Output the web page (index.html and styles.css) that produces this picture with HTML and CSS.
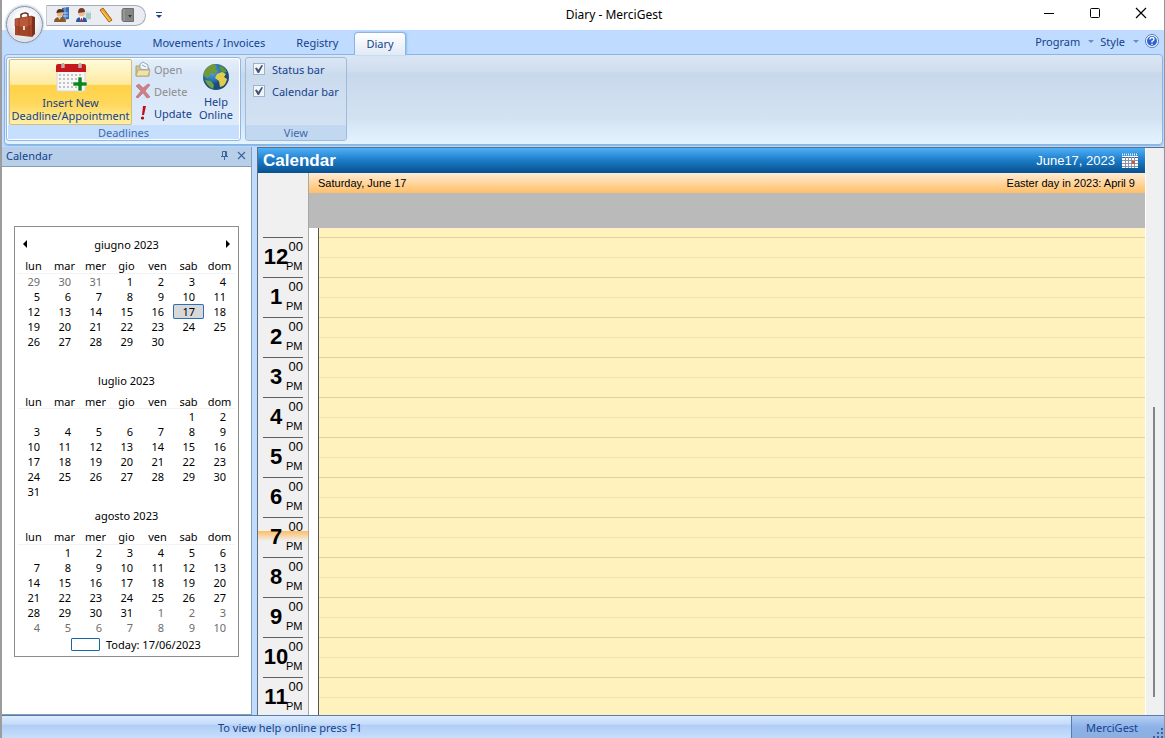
FILE: index.html
```html
<!DOCTYPE html>
<html lang="en">
<head>
<meta charset="utf-8">
<title>Diary - MerciGest</title>
<link rel="stylesheet" href="styles.css">
</head>
<body>
<div class="window">
  <header class="titlebar">
    <button class="app-button" aria-label="Application menu">
      <svg width="24" height="28" viewBox="0 0 24 28"><path d="M8 7V3.500Q12 1 15 3V6" fill="none" stroke="#6b2a18" stroke-width="1.500"/><path d="M2 8 19 5l2 18-2 3L2 24z" fill="#a44528"/><path d="M19 5l3 1v17l-3 3z" fill="#7c301c"/><path d="M2 8 19 5v9l-7 3-10-2z" fill="#b9593a" stroke="#8a3a22" stroke-width=".6"/><path d="M6 8v16M16 6v19" stroke="#8a3a22" stroke-width=".8"/><path d="M10 15h2v4h-2z" fill="#e8d6bd"/></svg>
    </button>
    <div class="quick">
      <button aria-label="Suppliers"><svg width="16" height="16" viewBox="0 0 16 16"><path d="M8 1l7-1v12l-7 1z" fill="#3b6fb8"/><path d="M11 0v12" stroke="#8fb8e6"/><path d="M9 6h5M9 9h5" stroke="#b9d7f5"/><path d="M0 15q0-5 6-5t6 5z" fill="#8a5a26"/><path d="M4 10h3l-1.500 3z" fill="#e8d9c4"/><circle cx="6" cy="6.500" r="3.200" fill="#e9b683"/><path d="M2.500 6q0-4 3.500-4t4 3z" fill="#4e3420"/></svg></button>
      <button aria-label="Customers"><svg width="16" height="16" viewBox="0 0 16 16"><path d="M9 4h6v9H9z" fill="#d5e2ee"/><path d="M10 7h5M10 9h5M10 11h5" stroke="#83b79a"/><path d="M0 15q0-5 5.500-5t5.500 5z" fill="#31549e"/><path d="M3.500 10h4l-2 5z" fill="#fff"/><path d="M5.500 11v4" stroke="#d22"/><circle cx="5.500" cy="6" r="3.200" fill="#f0bb91"/><path d="M2 6q0-5 3.500-5T9 5z" fill="#6f3f2a"/></svg></button>
      <button aria-label="Tools"><svg width="16" height="16" viewBox="0 0 16 16"><path d="M2 3l3-2 9 12-3 2z" fill="#eda432" stroke="#a9620f"/><path d="M4 4l8 10" stroke="#ffd768"/></svg></button>
      <button aria-label="Archive"><svg width="16" height="16" viewBox="0 0 16 16"><path d="M3 1.500h10.500v13H3L2 13V3z" fill="#868686" stroke="#6e6e6e"/><path d="M4 2v12" stroke="#a5a5a5"/><path d="M8 8h4l-1 1-1 2-1-2z" fill="#333"/></svg></button>
    </div>
    <button class="customize" aria-label="Customize toolbar"><svg width="6" height="6" viewBox="0 0 6 6"><path d="M0 0h6v1H0zM0 3h6L3 6z" fill="#23457f"/></svg></button>
    <h1>Diary - MerciGest</h1>
    <div class="window-controls">
      <button aria-label="Minimize"><svg width="12" height="12"><path d="M1 6.500h10" stroke="#000"/></svg></button>
      <button aria-label="Maximize"><svg width="12" height="12"><rect x="1.500" y="1.500" width="9" height="9" rx="1" fill="none" stroke="#000"/></svg></button>
      <button aria-label="Close"><svg width="12" height="12"><path d="M1 1l10 10M11 1L1 11" stroke="#000" stroke-width="1.200"/></svg></button>
    </div>
  </header>

  <nav class="tabs">
    <button>Warehouse</button>
    <button>Movements / Invoices</button>
    <button>Registry</button>
    <button class="active">Diary</button>
    <div class="tab-tools">
      <button>Program<span class="caret"></span></button>
      <button>Style<span class="caret"></span></button>
      <button class="help" aria-label="Help"><svg width="14" height="14" viewBox="0 0 14 14"><circle cx="7" cy="7" r="6.500" fill="#fff" stroke="#5578b8"/><circle cx="7" cy="7" r="5" fill="#2c62cf"/><path d="M5 5.500Q5 3.500 7 3.500T9 5.300Q9 6.500 7 7.300V8.500M7 9.700v1.300" fill="none" stroke="#fff" stroke-width="1.400"/></svg></button>
    </div>
  </nav>

  <section class="ribbon">
    <div class="group group-hot">
      <div class="group-body">
        <button class="big primary">
          <svg width="32" height="32" viewBox="0 0 32 32"><path d="M2 8h28v21H2z" fill="#f7f7f7" stroke="#d8d8d8"/><path d="M4 13h24M4 17h24M4 21h24M4 25h24" stroke="#c2c2c2" stroke-width="2" stroke-dasharray="2 2"/><path d="M1 4q0-2 2-2h26q2 0 2 2v6H1z" fill="#c4181c"/><path d="M8 1v5M25 1v5" stroke="#ddd" stroke-width="3"/><path d="M8 1v5M25 1v5" stroke="#888"/><path d="M23 15h4v5h5v4h-5v5h-4v-5h-5v-4h5z" fill="#0b861c" stroke="#fff" stroke-width=".6"/></svg>
          <span>Insert New<br>Deadline/Appointment</span>
        </button>
        <div class="small-actions">
          <button disabled><svg width="16" height="16" viewBox="0 0 16 16"><path d="M1 5h4l1 2h8v8H1z" fill="#d9c67d" stroke="#b0a06a"/><path d="M5 8V3l3-2 5 3v5z" fill="#f2f6fb" stroke="#93a6c2"/><path d="M7 4l4 2" stroke="#93a6c2"/><path d="M1 15l2-6h12l-2 6z" fill="#f0e2ac" stroke="#b9aa76"/></svg>Open</button>
          <button disabled><svg width="16" height="16" viewBox="0 0 16 16"><path d="M1 3l3-2 4 4 5-4 2 1-5 6 5 6-3 1-4-5-5 5-2-1 5-6z" fill="#cf8087" stroke="#b8666e" stroke-width=".6"/></svg>Delete</button>
          <button><svg width="16" height="16" viewBox="0 0 16 16"><path d="M8 1l3 0-2 9H7z" fill="#c40c13"/><circle cx="7.500" cy="13" r="1.600" fill="#a60b12"/></svg>Update</button>
        </div>
        <button class="big online">
          <svg width="32" height="32" viewBox="0 0 32 32"><defs><radialGradient id="sea" cx="35%" cy="30%"><stop stop-color="#58a8e2"/><stop offset=".65" stop-color="#2a74b4"/><stop offset="1" stop-color="#1d4c78"/></radialGradient></defs><circle cx="16" cy="16" r="13" fill="url(#sea)"/><path d="M4 11q3-6 9-8l4 2-2 3 3 2-4 3-3-1-1 3-3 2-3-2z" fill="#719939"/><path d="M19 4q6 2 8 7l-4 1-3-3z" fill="#5c9440"/><path d="M17 13l5-2 4 2-2 3 3 2q-1 5-4 7l-3 1-1-6-4-3z" fill="#e2ce4b"/><path d="M5 19l6 1 3 4-1 4q-6-3-8-9z" fill="#6ba24a"/></svg>
          <span>Help<br>Online</span>
        </button>
      </div>
      <h2>Deadlines</h2>
    </div>
    <div class="group">
      <div class="group-body checks">
        <label><input type="checkbox" checked>Status bar</label>
        <label><input type="checkbox" checked>Calendar bar</label>
      </div>
      <h2>View</h2>
    </div>
  </section>

  <main class="workspace">
    <aside class="side">
      <div class="side-head">
        <h2>Calendar</h2>
        <button aria-label="Auto hide"><svg width="9" height="9" viewBox="0 0 9 9"><path d="M2.500 5.500v-5h4v5M1 5.500h7M4.500 6v3M5.500 1v4" fill="none" stroke="#3f659f"/></svg></button>
        <button aria-label="Close panel"><svg width="9" height="9" viewBox="0 0 9 9"><path d="M1 1l7 7M8 1L1 8" stroke="#3f659f" stroke-width="1.200"/></svg></button>
      </div>
      <div class="side-body">
        <div class="months">
          <button class="prev" aria-label="Previous month"></button>
          <button class="next" aria-label="Next month"></button>
          <table>
            <caption>giugno 2023</caption>
            <thead><tr><th>lun</th><th>mar</th><th>mer</th><th>gio</th><th>ven</th><th>sab</th><th>dom</th></tr></thead>
            <tbody>
              <tr><td class="out">29</td><td class="out">30</td><td class="out">31</td><td>1</td><td>2</td><td>3</td><td>4</td></tr>
              <tr><td>5</td><td>6</td><td>7</td><td>8</td><td>9</td><td>10</td><td>11</td></tr>
              <tr><td>12</td><td>13</td><td>14</td><td>15</td><td>16</td><td class="selected">17</td><td>18</td></tr>
              <tr><td>19</td><td>20</td><td>21</td><td>22</td><td>23</td><td>24</td><td>25</td></tr>
              <tr><td>26</td><td>27</td><td>28</td><td>29</td><td>30</td><td></td><td></td></tr>
              <tr><td colspan="7"></td></tr>
            </tbody>
          </table>
          <table>
            <caption>luglio 2023</caption>
            <thead><tr><th>lun</th><th>mar</th><th>mer</th><th>gio</th><th>ven</th><th>sab</th><th>dom</th></tr></thead>
            <tbody>
              <tr><td></td><td></td><td></td><td></td><td></td><td>1</td><td>2</td></tr>
              <tr><td>3</td><td>4</td><td>5</td><td>6</td><td>7</td><td>8</td><td>9</td></tr>
              <tr><td>10</td><td>11</td><td>12</td><td>13</td><td>14</td><td>15</td><td>16</td></tr>
              <tr><td>17</td><td>18</td><td>19</td><td>20</td><td>21</td><td>22</td><td>23</td></tr>
              <tr><td>24</td><td>25</td><td>26</td><td>27</td><td>28</td><td>29</td><td>30</td></tr>
              <tr><td>31</td><td></td><td></td><td></td><td></td><td></td><td></td></tr>
            </tbody>
          </table>
          <table>
            <caption>agosto 2023</caption>
            <thead><tr><th>lun</th><th>mar</th><th>mer</th><th>gio</th><th>ven</th><th>sab</th><th>dom</th></tr></thead>
            <tbody>
              <tr><td></td><td>1</td><td>2</td><td>3</td><td>4</td><td>5</td><td>6</td></tr>
              <tr><td>7</td><td>8</td><td>9</td><td>10</td><td>11</td><td>12</td><td>13</td></tr>
              <tr><td>14</td><td>15</td><td>16</td><td>17</td><td>18</td><td>19</td><td>20</td></tr>
              <tr><td>21</td><td>22</td><td>23</td><td>24</td><td>25</td><td>26</td><td>27</td></tr>
              <tr><td>28</td><td>29</td><td>30</td><td>31</td><td class="out">1</td><td class="out">2</td><td class="out">3</td></tr>
              <tr><td class="out">4</td><td class="out">5</td><td class="out">6</td><td class="out">7</td><td class="out">8</td><td class="out">9</td><td class="out">10</td></tr>
            </tbody>
          </table>
          <button class="today"><span class="today-box"></span>Today: 17/06/2023</button>
        </div>
      </div>
    </aside>

    <section class="diary">
      <div class="diary-main">
        <div class="diary-head">
          <h2>Calendar</h2>
          <span>June17, 2023</span>
          <svg width="16" height="16" viewBox="0 0 16 16"><path d="M0 3h16v12H0z" fill="#fff"/><path d="M0 1.500h16" stroke="#e8f2fb" stroke-width="2" stroke-dasharray="1 1"/><path d="M0 4.500h16" stroke="#41628f"/><path d="M0 7.500h16M0 10.500h16M0 13.500h16M3.500 4v11M6.500 4v11M9.500 4v11M12.500 4v11" stroke="#8796ad"/><path d="M10 8h3v3h-3z" fill="#d4583a"/></svg>
        </div>
        <div class="day-grid">
          <div class="gutter-top"></div>
          <div class="day-head">
            <div class="day-title"><span>Saturday, June 17</span><span>Easter day in 2023: April 9</span></div>
            <div class="all-day"></div>
          </div>
          <ol class="hours">
            <li><b>12</b><span>00</span><small>PM</small></li>
            <li><b>1</b><span>00</span><small>PM</small></li>
            <li><b>2</b><span>00</span><small>PM</small></li>
            <li><b>3</b><span>00</span><small>PM</small></li>
            <li><b>4</b><span>00</span><small>PM</small></li>
            <li><b>5</b><span>00</span><small>PM</small></li>
            <li><b>6</b><span>00</span><small>PM</small></li>
            <li class="now"><b>7</b><span>00</span><small>PM</small></li>
            <li><b>8</b><span>00</span><small>PM</small></li>
            <li><b>9</b><span>00</span><small>PM</small></li>
            <li><b>10</b><span>00</span><small>PM</small></li>
            <li><b>11</b><span>00</span><small>PM</small></li>
          </ol>
          <div class="slots"></div>
        </div>
      </div>
      <div class="scroll"><div class="thumb"></div></div>
    </section>
  </main>

  <footer class="status">
    <p>To view help online press F1</p>
    <div class="brand">MerciGest
      <svg class="grip" width="10" height="10" viewBox="0 0 10 10"><path d="M8 0h2v2H8zM4 4h2v2H4zM8 4h2v2H8zM0 8h2v2H0zM4 8h2v2H4zM8 8h2v2H8z" fill="#40629a"/></svg>
    </div>
  </footer>
</div>
</body>
</html>
```
FILE: styles.css
```css
* { box-sizing: border-box; }
body {
  margin: 0;
  background: #9aa1a8;
  font: 11px/13px "Noto Sans", "Open Sans", sans-serif;
  color: #15428b;
}
button { font: inherit; color: inherit; background: none; border: 0; padding: 0; margin: 0; }
h1, h2, p, ol { margin: 0; padding: 0; font-size: inherit; font-weight: normal; list-style: none; }
svg { display: block; flex: none; }

.window {
  display: flex;
  flex-direction: column;
  height: 100vh;
  border-left: 2px solid #9c9c9c;
  border-right: 1px solid #8e979f;
  background: #bfdbff;
}

/* title bar */
.titlebar {
  position: relative;
  display: flex;
  align-items: center;
  flex: none;
  height: 30px;
  padding-left: 44px;
  background: #fff;
}
.app-button {
  position: absolute;
  z-index: 2;
  left: 4px;
  top: 6px;
  width: 37px;
  height: 37px;
  display: grid;
  place-items: center;
  border: 1px solid #8494ac;
  border-radius: 50%;
  background: radial-gradient(circle at 50% 40%, #fff 30%, #dde2ea 70%, #fff 90%);
  box-shadow: 0 0 2px 1px #c3cedd;
}
.quick {
  display: flex;
  align-items: center;
  gap: 6px;
  height: 21px;
  padding: 0 9px 0 7px;
  border: 1px solid #a5acb6;
  border-left-color: #c5cad2;
  border-radius: 0 11px 11px 0 / 0 11px 11px 0;
  background: #e9ecf1;
}
.customize { margin-left: 10px; }
.titlebar h1 {
  position: absolute;
  left: 62px;
  right: 0;
  top: 7px;
  width: max-content;
  margin: 0 auto;
  font-size: 12px;
  line-height: 16px;
  color: #000;
}
.window-controls { display: flex; gap: 34px; margin: -4px 17px 0 auto; }

/* tab strip */
.tabs { display: flex; align-items: flex-end; flex: none; height: 24px; padding-left: 51px; }
.tabs > button { height: 24px; padding: 0 10px; margin-right: 11px; }
.tabs > .active {
  height: 23px;
  padding: 0 11px 2px;
  margin: 0 0 -1px -5px;
  z-index: 1;
  border: 1px solid #8db2e3;
  border-bottom: 0;
  border-radius: 4px 4px 0 0;
  background: linear-gradient(#fff, #e1eaf6);
  box-shadow: 1px 0 2px #89c3ea;
}
.tab-tools { display: flex; align-items: center; align-self: flex-start; margin-left: auto; padding: 4px 5px 0 0; gap: 6px; }
.tab-tools button { display: flex; align-items: center; gap: 8px; }
.caret { border: 3px solid transparent; border-top-color: #6d8cbb; border-bottom: 0; }

/* ribbon */
.ribbon {
  display: flex;
  flex: none;
  gap: 4px;
  height: 91px;
  margin: 0 1px 2px 2px;
  padding: 2px 1px;
  border: 1px solid #8db2e3;
  border-radius: 4px;
  background: linear-gradient(#dbe6f4, #cfddee 19%, #c8d8ec 20%, #d3e2f1 70%, #e3f4ff);
  box-shadow: 0 1px 1px #7fb9e6;
}
.group {
  display: flex;
  flex-direction: column;
  height: 84px;
  border: 1px solid #9ebbdc;
  border-radius: 3px;
  background: linear-gradient(#dce7f5, #cbdbee 20%, #d6e4f4);
  overflow: hidden;
}
.group-hot { border-color: #8fb8e8; box-shadow: inset 0 0 0 1px #fff; background: linear-gradient(#e8f1fb, #d6e5f7 20%, #e0ecfb); }
.group-body { display: flex; flex: 1; padding: 0 3px 0 2px; }
.group h2 { height: 15px; line-height: 15px; text-align: center; color: #3e6aaa; background: #c1d8f0; }
.group-hot h2 { margin: 0 1px 1px; background: #c6dfff; height: 14px; }
.big { display: flex; flex-direction: column; align-items: center; gap: 2px; padding: 3px 4px 0; }
.primary {
  width: 123px;
  height: 66px;
  margin-top: 1px;
  padding-top: 2px;
  border: 1px solid #d2bd7d;
  border-radius: 2px;
  background: linear-gradient(#fffbd9, #ffe9a0 38%, #ffd146 40%, #ffd95d 70%, #fff0a8);
}
.small-actions { display: flex; flex-direction: column; padding: 0 3px; }
.small-actions button { display: flex; align-items: center; gap: 3px; height: 22px; }
.small-actions button:disabled { color: #8d8d8d; }
.checks { flex-direction: column; padding: 0 7px; }
.checks label { display: flex; align-items: center; gap: 7px; height: 22px; }
input[type="checkbox"] {
  appearance: none;
  display: grid;
  place-items: center;
  width: 12px;
  height: 12px;
  margin: 0;
  border: 1px solid #9db4d1;
  background: #f4f4f4;
}
input[type="checkbox"]::before {
  content: "";
  width: 8px;
  height: 8px;
  background: #3d5380;
  clip-path: polygon(0 40%, 22% 30%, 42% 60%, 82% 0, 100% 6%, 50% 100%, 34% 100%);
}

/* workspace */
.workspace { display: flex; flex: 1; min-height: 0; }
.side { display: flex; flex-direction: column; width: 250px; border-right: 1px solid #8c9cb0; margin-right: 5px; }
.side-head { display: flex; align-items: center; gap: 8px; flex: none; height: 20px; padding: 0 5px 2px 4px; background: #b7cfe9; border-bottom: 1px solid #8c9cb0; }
.side-head h2 { margin-right: auto; }
.side-body { flex: 1; min-height: 0; padding: 59px 12px 0; background: #fff; border-bottom: 1px solid #8c9cb0; color: #000; }
.months { position: relative; width: 225px; padding: 10px 3px 4px; border: 1px solid #8d8d8d; }
.months table { width: 217px; table-layout: fixed; border-collapse: collapse; margin-bottom: 9px; }
.months caption { height: 22px; line-height: 15px; }
.months tr { height: 14px; }
.months th { height: 14px; padding: 0; font-weight: normal; line-height: 13px; border-bottom: 1px solid #f3f3f3; }
.months td { height: 15px; padding: 0 9px 0 0; text-align: right; line-height: 15px; }
.months .out { color: #6d6d6d; }
.months .selected { background: #d8d8d8; box-shadow: inset 0 0 0 1px #2a6fb8; border-radius: 2px; }
.prev, .next { position: absolute; top: 13px; border: 4px solid transparent; }
.prev { left: 4px; border-right-color: #000; }
.next { right: 4px; border-left-color: #000; }
.today { display: flex; align-items: center; gap: 6px; height: 15px; margin: -7px auto 0 53px; }
.today-box { width: 29px; height: 13px; border: 1px solid #1668a8; border-radius: 1px; }

/* diary */
.diary { display: flex; flex: 1; min-width: 0; border-left: 1px solid #5f6f80; border-top: 1px solid #5f6f80; background: #f0f0f0; color: #000; font-family: "Liberation Sans", Arial, sans-serif; }
.diary-main { display: flex; flex-direction: column; flex: 1; min-width: 0; }
.diary-head { display: flex; align-items: center; flex: none; height: 25px; padding: 0 7px 0 5px; color: #fff; font-size: 13px; background: linear-gradient(#4fb0f8, #1c7bc6 50%, #06508f); }
.diary-head h2 { margin-right: auto; font-size: 17px; line-height: 22px; font-weight: bold; }
.diary-head span { margin-right: 7px; }
.day-grid { display: grid; grid-template-columns: 51px 1fr; grid-template-rows: 55px 1fr; flex: 1; min-height: 0; }
.gutter-top { border-right: 1px solid #a8a8a8; }
.day-title { display: flex; justify-content: space-between; align-items: center; height: 20px; padding: 0 10px 0 9px; background: linear-gradient(#ffecd3, #ffbf68); }
.all-day { height: 35px; background: #bababa; }
.hours { padding-top: 9px; border-right: 1px solid #a8a8a8; overflow: hidden; }
.hours li {
  display: grid;
  grid-template-columns: 25px 14px;
  grid-template-rows: 20px 19px;
  justify-content: center;
  height: 40px;
  background: linear-gradient(#606060, #606060) 5px 0 / 40px 1px no-repeat;
}
.hours b { grid-row: 1 / 3; align-self: center; text-align: center; font-size: 22px; line-height: 24px; }
.hours span { font-size: 13px; line-height: 20px; }
.hours small { font-size: 11px; line-height: 19px; justify-self: end; }
.hours .now { background: linear-gradient(#606060, #606060) 5px 0 / 40px 1px no-repeat, linear-gradient(#ffbd63, #f0f0f0) 0 14px / 100% 10px no-repeat; }
.slots {
  margin-left: 9px;
  border-left: 1px solid #555;
  background: repeating-linear-gradient(#dfcf9b 0 1px, #fff2bd 1px 20px, #f1e3ae 20px 21px, #fff2bd 21px 40px) 0 9px no-repeat, #fff2bd;
  box-shadow: -9px 0 #fff;
}
.scroll { width: 19px; border-left: 1px solid #fff; border-right: 2px solid #e4eefb; padding: 259px 0 18px 7px; }
.thumb { width: 2px; height: 100%; background: #858585; }

/* status bar */
.status { display: flex; flex: none; height: 23px; border-top: 1px solid #567db0; background: linear-gradient(#dcebff, #c4dbf9 38%, #afcdf5 40%, #c7defc); }
.status p { flex: 1; padding: 5px 0 0 216px; }
.brand { position: relative; width: 93px; padding: 5px 0 0 14px; border-left: 1px solid #567db0; background: linear-gradient(#b4cff2, #8db2e9 50%, #8caee0); }
.grip { position: absolute; right: 1px; bottom: 0; }
```
